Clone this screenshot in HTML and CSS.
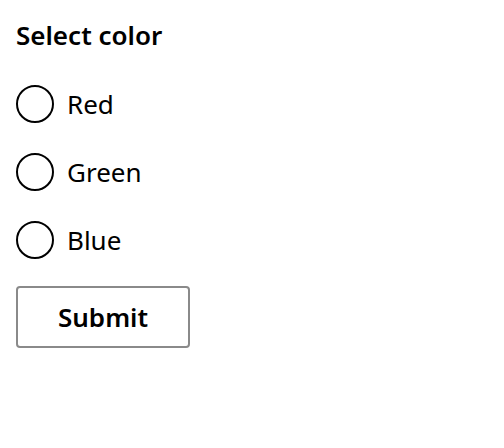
FILE: index.html
```html
<!DOCTYPE html>
<html lang="en">
<head>
<meta charset="utf-8">
<title>Select color</title>
<link rel="stylesheet" href="styles.css">
</head>
<body>
<form class="form">
  <div class="group" role="radiogroup" aria-labelledby="color-title">
    <div class="title" id="color-title">Select color</div>
    <label class="option"><input type="radio" name="color" class="radio"><span class="label">Red</span></label>
    <label class="option"><input type="radio" name="color" class="radio"><span class="label">Green</span></label>
    <label class="option"><input type="radio" name="color" class="radio"><span class="label">Blue</span></label>
  </div>
  <button type="button" class="submit">Submit</button>
</form>
</body>
</html>
```
FILE: styles.css
```css
html, body {
  margin: 0;
  background: #ffffff;
}
body {
  font-family: "Noto Sans", "Open Sans", sans-serif;
  color: #000000;
  padding: 17px 16px;
}
.form {
  display: flex;
  flex-direction: column;
  align-items: flex-start;
}
.group {
  display: flex;
  flex-direction: column;
  gap: 30px;
}
.title {
  font-size: 26px;
  font-weight: 600;
  line-height: 36px;
  margin-bottom: 2px;
}
.option {
  display: flex;
  align-items: center;
  gap: 13px;
  height: 38px;
}
.radio {
  appearance: none;
  margin: 0;
  width: 38px;
  height: 38px;
  border: 2px solid #000000;
  border-radius: 50%;
  background: #ffffff;
}
.label {
  font-size: 26px;
  line-height: 32px;
}
.submit {
  margin-top: 27px;
  width: 174px;
  height: 62px;
  border: 2px solid #8a8a8a;
  border-radius: 4px;
  background: #ffffff;
  font-family: inherit;
  font-size: 26px;
  font-weight: 600;
  color: #000000;
}
```
